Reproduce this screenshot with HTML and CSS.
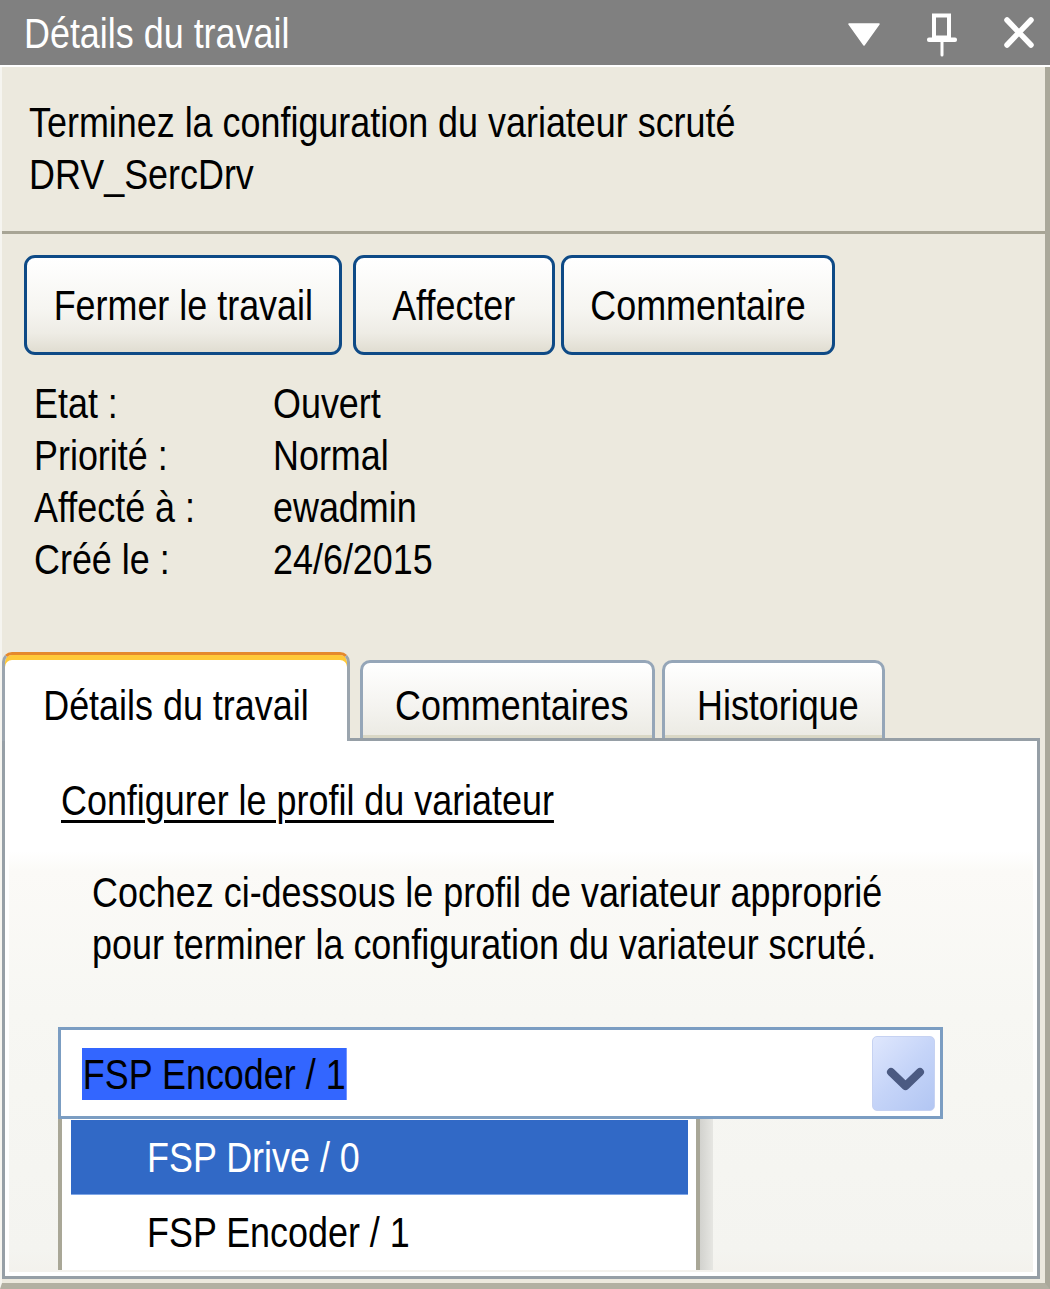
FILE: index.html
```html
<!DOCTYPE html>
<html lang="fr">
<head>
    <meta charset="UTF-8">
    <meta name="viewport" content="width=device-width, initial-scale=1.0">
    <title>Détails du travail</title>
    <link rel="stylesheet" href="styles.css">
</head>
<body>
    <div class="window">
        <div class="titlebar">
            <span class="nar">Détails du travail</span>
            <div class="title-tools">
                <!-- menu -->
                <svg width="32" height="48" viewBox="0 0 32 48">
                    <path d="M1 15 L31 15 L16 36 Z" fill="#fff" stroke="#fff" stroke-width="1.5" stroke-linejoin="round"/>
                </svg>
                <!-- épingle -->
                <svg width="32" height="48" viewBox="0 0 32 48">
                    <rect x="8" y="6.5" width="15" height="22" fill="none" stroke="#fff" stroke-width="4"/>
                    <rect x="1" y="28.5" width="30" height="4.5" rx="2" fill="#fff"/>
                    <line x1="16" y1="32" x2="16" y2="46" stroke="#fff" stroke-width="3" stroke-linecap="round"/>
                </svg>
                <!-- fermer -->
                <svg width="32" height="48" viewBox="0 0 32 48">
                    <path d="M3 11 L27 36 M27 11 L3 36" stroke="#fff" stroke-width="5.5" stroke-linecap="round"/>
                </svg>
            </div>
        </div>

        <div class="frame">
            <div class="summary">
                <span class="nar">Terminez la configuration du variateur scruté<br>DRV_SercDrv</span>
            </div>

            <div class="actions">
                <button class="button btn-fermer"><span class="nar mid">Fermer le travail</span></button>
                <button class="button btn-affecter"><span class="nar mid">Affecter</span></button>
                <button class="button btn-commentaire"><span class="nar mid">Commentaire</span></button>
            </div>

            <div class="info">
                <span class="nar">Etat :</span><span class="nar">Ouvert</span>
                <span class="nar">Priorité :</span><span class="nar">Normal</span>
                <span class="nar">Affecté à :</span><span class="nar">ewadmin</span>
                <span class="nar">Créé le :</span><span class="nar">24/6/2015</span>
            </div>

            <div class="tabs">
                <div class="tab active tab-details"><span class="nar mid">Détails du travail</span></div>
                <div class="tab tab-commentaires"><span class="nar mid">Commentaires</span></div>
                <div class="tab tab-historique"><span class="nar mid">Historique</span></div>
            </div>

            <div class="tab-panel">
                <a href="#" class="task-link nar">Configurer le profil du variateur</a>
                <p class="task-text"><span class="nar">Cochez ci-dessous le profil de variateur approprié<br>pour terminer la configuration du variateur scruté.</span></p>

                <div class="select-wrap">
                    <div class="select">
                        <span class="select-value nar">FSP Encoder / 1</span>
                        <span class="select-btn">
                            <svg width="61" height="75" viewBox="0 0 61 75">
                                <path d="M18 35 L32.5 49 L47 35" fill="none" stroke="#4b5a82" stroke-width="8" stroke-linecap="round" stroke-linejoin="round"/>
                            </svg>
                        </span>
                    </div>
                    <div class="select-list">
                        <div class="option selected"><span class="nar">FSP Drive / 0</span></div>
                        <div class="option"><span class="nar">FSP Encoder / 1</span></div>
                    </div>
                </div>
            </div>
        </div>
    </div>
</body>
</html>
```

FILE: styles.css
```css
* { margin: 0; padding: 0; box-sizing: border-box; }
body {
    font-family: "Liberation Sans", Arial, sans-serif;
    font-size: 43px;
    line-height: 52px;
    color: #000;
    background: #fff;
}
/* texte étroit (façon Arial Narrow) */
.nar {
    display: inline-block;
    white-space: nowrap;
    transform: scaleX(.835);
    transform-origin: 0 0;
}
.nar.mid { transform-origin: 50% 0; }
.window {
    width: 1050px;
    height: 1289px;
    overflow: hidden;
    background-color: #ece9de;
}
.titlebar {
    height: 67px;
    background-color: #808080;
    border-bottom: 2px solid #fff;
    display: flex;
    align-items: center;
    justify-content: space-between;
    padding: 0 14px 0 24px;
    color: white;
}
.title-tools {
    display: flex;
    gap: 46px;
}
.frame {
    height: 1222px;
    display: flex;
    flex-direction: column;
    border-left: 2px solid #f6f5f0;
    border-right: 5px solid #aaa89a;
    border-bottom: 6px solid #b2b0a2;
}
.summary {
    height: 167px;
    padding: 29px 0 0 27px;
    border-bottom: 3px solid #a8a595;
}
.actions {
    display: flex;
    margin: 21px 0 0 22px;
}
.button {
    height: 100px;
    font: inherit;
    color: #000;
    border: 3px solid #0e4a86;
    border-radius: 11px;
    background: linear-gradient(#ffffff, #f6f5f1 55%, #eeece5 80%, #e0ddd1);
    cursor: pointer;
}
.btn-fermer { width: 318px; margin-right: 11px; }
.btn-affecter { width: 202px; margin-right: 6px; }
.btn-commentaire { width: 274px; }
.info {
    display: grid;
    grid-template-columns: 239px auto;
    margin: 22px 0 0 32px;
}
.tabs {
    display: flex;
    align-items: flex-end;
    height: 86px;
    margin-top: 67px;
    position: relative;
    z-index: 1;
}
.tab {
    height: 78px;
    padding-top: 16px;
    text-align: center;
    border: 3px solid #95a6b8;
    border-bottom: none;
    border-radius: 10px 10px 0 0;
    background: linear-gradient(#ffffff, #f4f3ef 60%, #ebeae3);
    box-shadow: inset 0 -3px 0 #d9d7c5;
}
.tab.active {
    height: 89px;
    margin-bottom: -3px;
    padding-top: 24px;
    border-color: #9ba5ae;
    border-top-color: #e5892c;
    background: #fff;
    box-shadow: inset 0 5px 0 #ffc938;
}
.tab-details { width: 348px; margin-right: 10px; }
.tab-commentaires { width: 295px; margin-right: 7px; padding-left: 8px; }
.tab-historique { width: 223px; padding-left: 8px; }
.tab-panel {
    flex: 1;
    margin: 0 5px 4px 0;
    padding: 33px 0 0 56px;
    border: 3px solid #969fa6;
    box-shadow: inset 0 0 0 4px #fff;
    background: linear-gradient(#ffffff 0, #ffffff 110px, #fbfaf7 130px, #f7f7f3 270px, #f4f4f0 95%, #f3f1ec 100%);
}
.task-link {
    color: #000;
    text-decoration: underline;
    text-underline-offset: 5px;
    text-decoration-thickness: 3px;
}
.task-text {
    margin: 40px 0 0 31px;
}
.select-wrap {
    position: relative;
    width: 885px;
    margin: 57px 0 0 -3px;
}
.select {
    height: 92px;
    border: 3px solid #7b9dc2;
    background: #fff;
    display: flex;
    justify-content: space-between;
    padding: 18px 5px 0 21px;
}
.select-value {
    align-self: flex-start;
    height: 52px;
    padding: 0 1px;
    background-color: #3366ff;
}
.select-btn {
    width: 63px;
    height: 75px;
    margin-top: -12px;
    border: 1px solid #c6d2f2;
    border-radius: 5px;
    background: linear-gradient(135deg, #dfe7fd, #c5d4f8 50%, #b2c6f3);
}
.select-btn svg { display: block; }
.select-list {
    position: absolute;
    top: 100%;
    left: 0;
    width: 642px;
    height: 151px;
    padding-top: 1px;
    background: #fff;
    border-left: 4px solid #a9a797;
    border-right: 4px solid #a9a797;
}
.select-list::after {
    content: "";
    position: absolute;
    top: 0;
    right: -17px;
    width: 13px;
    height: 100%;
    background: linear-gradient(to right, #d2d2ce, #e6e6e2);
}
.option {
    height: 75px;
    margin: 0 8px 0 9px;
    padding: 11px 0 0 76px;
}
.option.selected {
    background-color: #3169c6;
    border-bottom: 1px solid #7fa6e6;
    color: #fff;
}
```
